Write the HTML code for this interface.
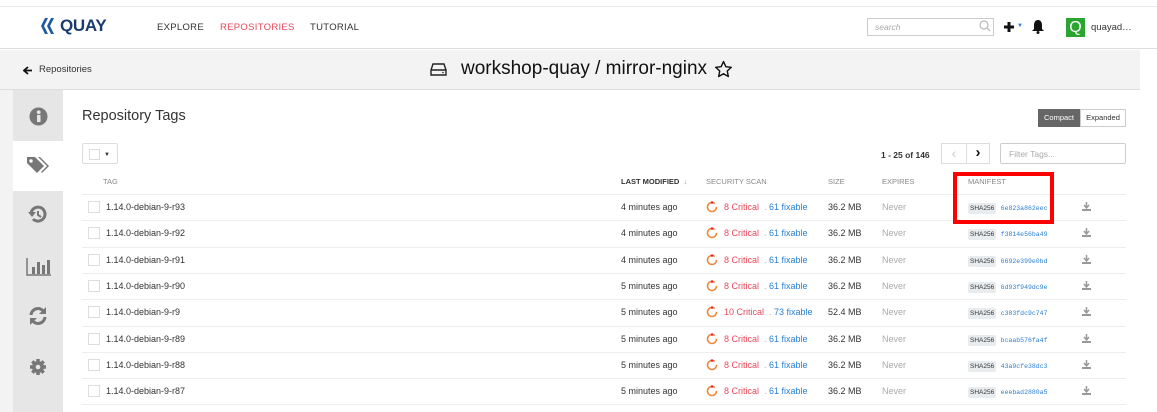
<!DOCTYPE html>
<html><head><meta charset="utf-8"><style>
*{box-sizing:border-box;margin:0;padding:0}
body{width:1157px;height:412px;overflow:hidden;background:#fff;font-family:"Liberation Sans",sans-serif;position:relative;color:#333}
.a{position:absolute;white-space:nowrap}
.nav{top:6px;left:0;width:1157px;height:43px;border-top:1px solid #e8e8e8;border-bottom:1px solid #ddd;background:#fff}
.bar{top:50px;left:0;width:1140px;height:40px;background:#f3f3f3;border-bottom:1px solid #ddd}
.side{left:13px;top:90px;width:50px;height:322px;background:#e6e6e6}
.lg{left:0;top:90px;width:13px;height:322px;background:#f3f3f3}
.sq{width:12px;height:12px;border:1px solid #ddd;background:#fff}
.row{font-size:9px;color:#333}
.sha{background:#e8ecef;color:#333;font-size:6.5px;padding:2px 2px;border-radius:2px}
.hash{color:#2a7fd4;font-size:6.5px;font-family:"Liberation Mono",monospace}
.hd{font-size:7.5px;color:#888;top:177px}
</style></head><body>
<div class="a nav"></div>
<svg class="a" style="left:40px;top:17px" width="18" height="18" viewBox="0 0 18 18"><path d="M5 1L1 9l4 8h3L4 9l4-8zM11 1L7 9l4 8h3l-4-8 4-8z" fill="#1f5a9e"/></svg>
<div class="a" style="left:60px;top:16px;font-size:17px;font-weight:bold;color:#1b3d6d;letter-spacing:-0.3px">QUAY</div>
<div class="a" style="left:157px;top:22px;font-size:9.5px;color:#333;letter-spacing:0.3px">EXPLORE</div>
<div class="a" style="left:220px;top:22px;font-size:9.5px;color:#e8495a;letter-spacing:0.3px">REPOSITORIES</div>
<div class="a" style="left:310px;top:22px;font-size:9.5px;color:#333;letter-spacing:0.3px">TUTORIAL</div>
<div class="a" style="left:867px;top:18px;width:127px;height:18px;border:1px solid #ccc;font-size:8.5px;color:#aaa;font-style:italic;padding:3px 7px">search</div>
<svg class="a" style="left:979px;top:20px" width="12" height="12" viewBox="0 0 12 12"><circle cx="5" cy="5" r="4" fill="none" stroke="#bbb" stroke-width="1.2"/><path d="M8 8l3 3" stroke="#bbb" stroke-width="1.3"/></svg>
<svg class="a" style="left:1003px;top:21px" width="12" height="12"><path d="M6 1v10M1 6h10" stroke="#111" stroke-width="3"/></svg>
<div class="a" style="left:1017px;top:23px;font-size:6px;color:#2a7fd4">▼</div>
<svg class="a" style="left:1031px;top:19px" width="14" height="15" viewBox="0 0 14 15"><path d="M7 1C4 1 3 4 3 6v4L1 12h12l-2-2V6c0-2-1-5-4-5z" fill="#111"/><circle cx="7" cy="13.5" r="1.5" fill="#111"/></svg>
<div class="a" style="left:1066px;top:18px;width:19px;height:19px;background:#2aa52f;color:#fff;font-size:16px;text-align:center;line-height:19px">Q</div>
<div class="a" style="left:1091px;top:22px;font-size:9.5px;color:#333">quayad…</div>

<div class="a bar"></div>
<svg class="a" style="left:23px;top:66px" width="10" height="9"><path d="M5 1L1 4.5 5 8M1 4.5h8" stroke="#111" stroke-width="1.8" fill="none"/></svg>
<div class="a" style="left:39px;top:64px;font-size:9.5px;color:#333">Repositories</div>
<svg class="a" style="left:430px;top:63px" width="17" height="13" viewBox="0 0 17 13"><path d="M3 1h11l2 6v5H1V7z M1 7h15" fill="none" stroke="#222" stroke-width="1.4"/><circle cx="13" cy="9.5" r=".8" fill="#222"/></svg>
<div class="a" style="left:461px;top:58px;font-size:19px;color:#111">workshop-quay / mirror-nginx</div>
<svg class="a" style="left:714px;top:60px" width="19" height="18" viewBox="0 0 24 23"><path d="M12 2l3 6.5 7 .8-5.2 4.8 1.4 7L12 17.6 5.8 21.1l1.4-7L2 9.3l7-.8z" fill="none" stroke="#111" stroke-width="1.8" stroke-linejoin="round"/></svg>

<div class="a lg"></div>
<div class="a side"></div>
<div class="a" style="left:13px;top:141px;width:50px;height:50px;background:#fff"></div>
<svg class="a" style="left:29px;top:107px" width="19" height="19"><circle cx="9.5" cy="9.5" r="9" fill="#777"/><rect x="8" y="8" width="3.5" height="7" fill="#e6e6e6"/><circle cx="9.7" cy="5.3" r="1.9" fill="#e6e6e6"/></svg>
<svg class="a" style="left:26px;top:156px" width="25" height="20" viewBox="0 0 25 20"><path d="M1 1h8l9 9-7 7-10-10z" fill="#777"/><circle cx="5" cy="5" r="1.7" fill="#fff"/><path d="M12 1h2l9 9-7 7-1-1 6-6z" fill="#777"/></svg>
<svg class="a" style="left:28px;top:205px" width="20" height="20" viewBox="0 0 20 20"><path d="M3 9a7 7 0 1 1 2 5" fill="none" stroke="#777" stroke-width="3"/><path d="M0 7l4 5 4-5z" fill="#777"/><path d="M10 6v4l3 2" stroke="#777" stroke-width="2" fill="none"/></svg>
<svg class="a" style="left:26px;top:257px" width="26" height="20"><path d="M1 1v17h24" stroke="#777" stroke-width="1.5" fill="none"/><rect x="6" y="10" width="3" height="7" fill="#777"/><rect x="11" y="5" width="3" height="12" fill="#777"/><rect x="16" y="8" width="3" height="9" fill="#777"/><rect x="21" y="3" width="3" height="14" fill="#777"/></svg>
<svg class="a" style="left:28px;top:306px" width="20" height="20" viewBox="0 0 20 20"><path d="M3 9a7 7 0 0 1 13-3M17 11a7 7 0 0 1-13 3" fill="none" stroke="#777" stroke-width="3"/><path d="M18 1v7h-7zM2 19v-7h7z" fill="#777"/></svg>
<svg class="a" style="left:29px;top:358px" width="18" height="18" viewBox="0 0 18 18"><circle cx="9" cy="9" r="6" fill="#777"/><g stroke="#777" stroke-width="3.5"><path d="M9 1v16M1 9h16M3.3 3.3l11.4 11.4M14.7 3.3L3.3 14.7"/></g><circle cx="9" cy="9" r="2.3" fill="#e6e6e6"/></svg>

<div class="a" style="left:82px;top:108px;font-size:14.5px;color:#333">Repository Tags</div>
<div class="a" style="left:1038px;top:109px;width:42px;height:18px;background:#666;color:#fff;font-size:7.5px;text-align:center;line-height:18px">Compact</div>
<div class="a" style="left:1080px;top:109px;width:46px;height:18px;border:1px solid #ccc;color:#333;font-size:7.5px;text-align:center;line-height:16px">Expanded</div>
<div class="a" style="left:82px;top:143px;width:36px;height:21px;border:1px solid #ddd;border-radius:2px"></div>
<div class="a sq" style="left:89px;top:149px;width:11px;height:11px"></div>
<div class="a" style="left:104px;top:152px;font-size:6px;color:#333">▼</div>
<div class="a" style="left:881px;top:150px;font-size:8.5px;font-weight:bold;color:#333">1 - 25 of 146</div>
<div class="a" style="left:941px;top:143px;width:26px;height:21px;border:1px solid #ddd;color:#ccc;font-size:14px;text-align:center;line-height:18px">‹</div>
<div class="a" style="left:966px;top:143px;width:24px;height:21px;border:1px solid #ddd;color:#111;font-size:15px;font-weight:bold;text-align:center;line-height:18px">›</div>
<div class="a" style="left:1000px;top:143px;width:126px;height:21px;border:1px solid #ccc;border-radius:2px;font-size:8.5px;color:#aaa;padding:5px 8px">Filter Tags...</div>

<div class="a hd" style="left:103px">TAG</div>
<div class="a hd" style="left:621px;color:#333;font-weight:bold">LAST MODIFIED &nbsp;<span style="font-weight:normal;color:#999">↓</span></div>
<div class="a hd" style="left:706px">SECURITY SCAN</div>
<div class="a hd" style="left:828px">SIZE</div>
<div class="a hd" style="left:882px">EXPIRES</div>
<div class="a hd" style="left:968px">MANIFEST</div>

<div id="rows"></div>
<div class="a" style="left:953px;top:172px;width:101px;height:52px;border:4px solid #f00;z-index:10"></div>
<script>
var d=[["r93","4",8,61,"36.2","6e823a862eec"],["r92","4",8,61,"36.2","f3814e56ba49"],["r91","4",8,61,"36.2","6692e399e0bd"],["r90","5",8,61,"36.2","6d93f949dc9e"],["r9","5",10,73,"52.4","c383fdc9c747"],["r89","5",8,61,"36.2","bcaab576fa4f"],["r88","5",8,61,"36.2","43a9cfe38dc3"],["r87","5",8,61,"36.2","eeebad2880a5"]];
var h="";
for(var i=0;i<d.length;i++){var y=Math.round(194+i*26.3),t=y+8,r=d[i];
h+='<div class="a" style="left:82px;top:'+y+'px;width:1044px;border-top:1px solid #eee"></div>';
h+='<div class="a sq" style="left:88px;top:'+(y+7)+'px"></div>';
h+='<div class="a row" style="left:106px;top:'+t+'px">1.14.0-debian-9-'+r[0]+'</div>';
h+='<div class="a row" style="left:621px;top:'+t+'px">'+r[1]+' minutes ago</div>';
h+='<svg class="a" style="left:706px;top:'+(y+7)+'px" width="12" height="12"><circle cx="6" cy="6" r="4.5" fill="none" stroke="#f0883a" stroke-width="1.6" stroke-dasharray="24 4"/><circle cx="6" cy="1.5" r="1.3" fill="#e23"/></svg>';
h+='<div class="a row" style="left:724px;top:'+t+'px;color:#e8495a">'+r[2]+' Critical <span style="color:#aaa">&nbsp;.&nbsp;</span><span style="color:#2a7fd4">'+r[3]+' fixable</span></div>';
h+='<div class="a row" style="left:828px;top:'+t+'px">'+r[4]+' MB</div>';
h+='<div class="a row" style="left:882px;top:'+t+'px;color:#aaa">Never</div>';
h+='<div class="a" style="left:968px;top:'+(y+6)+'px;line-height:12px"><span class="sha">SHA256</span> <span class="hash">'+r[5]+'</span></div>';
h+='<svg class="a" style="left:1082px;top:'+(y+8)+'px" width="9" height="9"><path d="M4.5 0v5M2 3l2.5 3L7 3" stroke="#999" stroke-width="1.5" fill="none"/><rect x="0" y="7" width="9" height="2" fill="#999"/></svg>';}
h+='<div class="a" style="left:82px;top:404px;width:1044px;border-top:1px solid #eee"></div>';
document.getElementById("rows").innerHTML=h;
</script>
</body></html>
